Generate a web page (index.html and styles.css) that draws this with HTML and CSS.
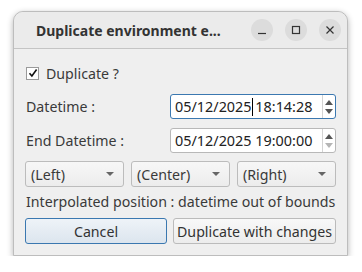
FILE: index.html
```html
<!DOCTYPE html>
<html lang="en">
<head>
    <meta charset="UTF-8">
    <meta name="viewport" content="width=device-width, initial-scale=1.0">
    <title>Duplicate environment entry</title>
    <link rel="stylesheet" href="styles.css">
</head>
<body>
    <div class="window">
        <div class="titlebar">
            <span class="title">Duplicate environment e...</span>
            <div class="controls">
                <span class="ctl">
                    <svg width="10" height="10" viewBox="0 0 10 10"><path d="M1 8.5h8" stroke="#333" stroke-width="1.2"/></svg>
                </span>
                <span class="ctl">
                    <svg width="10" height="10" viewBox="0 0 10 10"><rect x="1.5" y="1.5" width="7" height="7" fill="none" stroke="#333" stroke-width="1.2"/></svg>
                </span>
                <span class="ctl">
                    <svg width="10" height="10" viewBox="0 0 10 10"><path d="M1.5 1.5l7 7M8.5 1.5l-7 7" stroke="#333" stroke-width="1.2"/></svg>
                </span>
            </div>
        </div>

        <div class="content">
            <label class="check-row">
                <span class="checkbox">
                    <svg width="10" height="10" viewBox="0 0 10 10"><path d="M1.5 5.2l2.4 2.8L8.6 1.5" fill="none" stroke="#111" stroke-width="1.6"/></svg>
                </span>
                Duplicate ?
            </label>

            <div class="fields">
                <span class="label">Datetime :</span>
                <div class="spin focused">
                    <span class="spin-text">05/12/2025 <span class="caret"></span>18:14:28</span>
                    <span class="spin-btns">
                        <span class="arrow up"></span>
                        <span class="arrow down"></span>
                    </span>
                </div>

                <span class="label">End Datetime :</span>
                <div class="spin">
                    <span class="spin-text">05/12/2025 19:00:00</span>
                    <span class="spin-btns">
                        <span class="arrow up"></span>
                        <span class="arrow down disabled"></span>
                    </span>
                </div>
            </div>

            <div class="combos">
                <div class="combo"><span>(Left)</span><span class="combo-arrow"></span></div>
                <div class="combo"><span>(Center)</span><span class="combo-arrow"></span></div>
                <div class="combo"><span>(Right)</span><span class="combo-arrow"></span></div>
            </div>

            <div class="status">Interpolated position : datetime out of bounds</div>

            <div class="buttons">
                <button class="btn default">Cancel</button>
                <button class="btn">Duplicate with changes</button>
            </div>
        </div>
    </div>
</body>
</html>
```

FILE: styles.css
```css
body {
    margin: 0;
    background: #ffffff;
    font-family: "Noto Sans", "Open Sans", sans-serif;
    color: #3a3a3a;
}
.window {
    margin: 11px 0 0 13px;
    width: 335px;
    box-sizing: border-box;
    background: #efefef;
    border: 1px solid #bdbdbd;
    border-radius: 10px 10px 0 0;
    box-shadow: 0 2px 6px rgba(0, 0, 0, 0.3);
}
.titlebar {
    height: 37px;
    box-sizing: border-box;
    border-bottom: 1px solid #c4c4c4;
    background: #ebebeb;
    border-radius: 10px 10px 0 0;
    display: flex;
    align-items: center;
    padding: 0 6px 0 22px;
}
.title {
    flex: 1;
    font-weight: bold;
    font-size: 14px;
    color: #333;
}
.controls {
    display: flex;
    gap: 12px;
}
.ctl {
    width: 22px;
    height: 22px;
    border-radius: 50%;
    background: #dcdcdc;
    display: flex;
    align-items: center;
    justify-content: center;
}
.content {
    padding: 17px 11px 11px 11px;
    display: flex;
    flex-direction: column;
    font-size: 14.2px;
}
.check-row {
    display: flex;
    align-items: center;
    gap: 7px;
    margin-left: 1px;
    height: 14px;
}
.checkbox {
    width: 11px;
    height: 11px;
    border: 1px solid #9a9a9a;
    background: #fff;
    display: flex;
    align-items: center;
    justify-content: center;
}
.fields {
    margin-top: 14px;
    display: grid;
    grid-template-columns: 1fr 166px;
    row-gap: 9px;
    align-items: center;
}
.label {
    padding-left: 1px;
}
.spin {
    height: 25px;
    box-sizing: border-box;
    border: 1px solid #b8b8b8;
    border-radius: 3px;
    background: #fff;
    display: flex;
    align-items: stretch;
}
.spin.focused {
    border-color: #3b78b0;
}
.spin-text {
    flex: 1;
    padding-left: 4px;
    font-size: 14.4px;
    color: #222;
    display: flex;
    align-items: center;
    white-space: pre;
}
.caret {
    display: inline-block;
    width: 1px;
    height: 18px;
    background: #000;
    margin-left: -3px;
    margin-right: 2px;
}
.spin-btns {
    width: 12px;
    border-left: 1px solid #d4d4d4;
    display: flex;
    flex-direction: column;
    align-items: center;
    justify-content: center;
    gap: 4px;
}
.arrow {
    width: 0;
    height: 0;
    border-left: 4px solid transparent;
    border-right: 4px solid transparent;
}
.arrow.up {
    border-bottom: 5px solid #555;
}
.arrow.down {
    border-top: 5px solid #555;
}
.arrow.down.disabled {
    border-top-color: #b5b5b5;
}
.combos {
    margin-top: 8px;
    display: grid;
    grid-template-columns: repeat(3, 1fr);
    gap: 7px;
}
.combo {
    height: 26px;
    box-sizing: border-box;
    border: 1px solid #bcbcbc;
    border-radius: 3px;
    background: linear-gradient(#f7f7f7, #ececec);
    display: flex;
    align-items: center;
    justify-content: space-between;
    padding: 0 9px 0 5px;
}
.combo-arrow {
    width: 0;
    height: 0;
    border-left: 4px solid transparent;
    border-right: 4px solid transparent;
    border-top: 4px solid #666;
}
.status {
    margin-top: 6px;
    height: 18px;
    line-height: 18px;
    padding-left: 1px;
    white-space: nowrap;
}
.buttons {
    margin-top: 7px;
    display: flex;
    gap: 6px;
}
.btn {
    height: 26px;
    font-family: inherit;
    font-size: 14.2px;
    color: #333;
    border: 1px solid #bbbbbb;
    border-radius: 3px;
    background: linear-gradient(#f8f8f8, #ececec);
    padding: 0 3px;
}
.btn.default {
    flex: 1;
    border-color: #3b78b0;
    background: linear-gradient(#eef3f8, #dce5ee);
}
```
